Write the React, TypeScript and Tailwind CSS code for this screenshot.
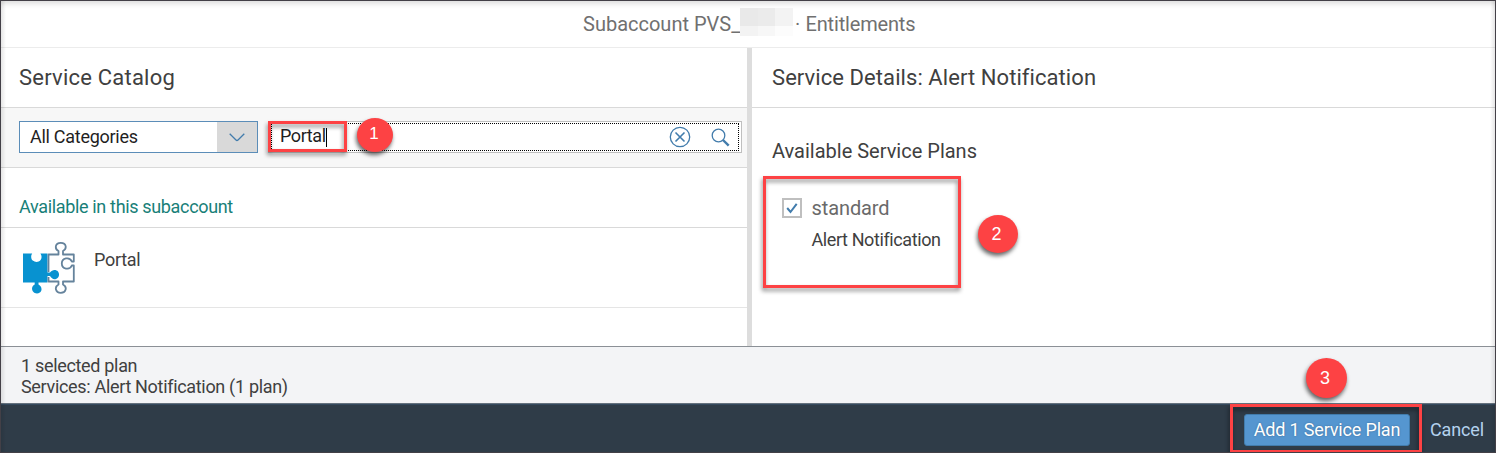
import type { ReactNode } from "react";

function Marker({ children, className }: { children: ReactNode; className: string }) {
  return (
    <div
      className={`absolute flex items-center justify-center rounded-[50%] bg-[#fd4244] font-['Liberation_Sans',sans-serif] text-white shadow-[-1px_3px_4px_rgba(0,0,0,0.6)] ${className}`}
    >
      {children}
    </div>
  );
}

function Highlight({ className }: { className: string }) {
  return (
    <div
      className={`pointer-events-none absolute border-3 border-[#fd4244] drop-shadow-[-1px_3px_2px_rgba(0,0,0,0.45)] ${className}`}
    />
  );
}

function PuzzleIcon() {
  return (
    <svg width="54" height="54" viewBox="0 0 54 54" className="shrink-0">
      <path
        d="M1 12.5H10.2C8.6 14.5 8.9 18 10.8 19.6C13 21.5 16.5 21.5 18.4 19.3C20 17.4 19.9 14.5 18.4 12.5H25.5V31.5H28C30 28.5 34 28.2 36 30.5C38 33 37 37 34 38C31.5 38.8 29.5 37.5 28 35H25.5V41.5H16.5V43.5C20 45.5 20.5 49.5 17.8 51.5C15.5 53.2 12.5 52.5 10.8 50.2C9.3 48 10 45 12.7 43.5V41.5H1Z"
        fill="#0892d0"
      />
      <path
        d="M26.5 31V13.5H36.5V10C32.5 8 32.8 1.8 38.8 1.8C44.8 1.8 45 8 41 10V13.5H51.8V20.5H49.8C47.5 15.2 39.8 17 39.8 22.5C39.8 28 47.5 29.8 49.8 24.5H51.8V40.5H41V43.5C45.5 46 44.2 51.8 38.8 51.8C33.4 51.8 32.1 46 36.5 43.5V40.5H26.5V36"
        fill="none"
        stroke="#65839c"
        strokeWidth="1.8"
        strokeLinejoin="round"
      />
    </svg>
  );
}

export default function App() {
  return (
    <div className="relative flex h-[453px] w-[1496px] flex-col overflow-hidden border border-[#434047] bg-white font-['Roboto',sans-serif] text-[#404040]">
      <header className="flex h-[47px] shrink-0 border-b border-[#ececec] pl-[582px] text-[20px] leading-[46px] whitespace-nowrap text-[#707070] shadow-[inset_0_7px_6px_-5px_rgba(0,0,0,0.16)]">
        <span className="w-[157px]">Subaccount PVS_</span>
        <span className="mt-[7px] grid h-[28px] w-[53px] grid-cols-3 grid-rows-[18px_10px]">
          <i className="bg-[#e9e9e9]" />
          <i className="bg-[#ebebeb]" />
          <i className="bg-[#f3f3f3]" />
          <i className="bg-[#f3f3f3]" />
          <i className="bg-[#f7f7f7]" />
          <i className="bg-[#fcfcfc]" />
        </span>
        <span className="ml-[2px] w-[10.5px]">·</span>
        <span className="tracking-[-0.17px]">Entitlements</span>
      </header>

      <main className="flex h-[298px] shrink-0">
        <section className="w-[746px] shrink-0">
          <h1 className="h-[60px] border-b border-[#d9d9d9] pl-[18px] text-[22px] leading-[59px] tracking-[0.22px]">
            <span>Service Catalog</span>
          </h1>
          <div className="flex h-[60px] border-b border-[#d9d9d9] bg-[#f7f7f7] pt-[13px] pl-[18px] text-[18px] text-[#1f1f1f]">
            <div className="flex h-[32px] w-[239px] border border-[#5b8db8] bg-white">
              <span className="w-[197px] pl-[10px] leading-[30px] tracking-[-0.28px]">All Categories</span>
              <span className="flex flex-1 items-center justify-center bg-[#d9d9d9]">
                <svg width="16" height="9" viewBox="0 0 16 9" fill="none" stroke="#427cac" strokeWidth="1.3">
                  <path d="M0.7 0.7L7 7Q8 8 9 7L15.3 0.7" />
                </svg>
              </span>
            </div>
            <div className="ml-[10px] h-[32px] w-[474px] border border-[#bfbfbf] bg-white px-[2px] py-px">
              <div className="flex h-full items-center border border-dotted border-black pl-[8px]">
                <span className="mb-[2px] leading-[20px] tracking-[-0.4px]">Portal</span>
                <span className="h-[19px] w-px bg-black" />
                <svg className="ml-auto" width="22" height="22" viewBox="0 0 22 22" fill="none" stroke="#427cac" strokeWidth="1.3">
                  <circle cx="11" cy="11" r="9.7" />
                  <path d="M6.5 6.5L15.5 15.5M15.5 6.5L6.5 15.5" strokeWidth="1.6" />
                </svg>
                <svg className="mr-[8px] ml-[20px]" width="19" height="19" viewBox="0 0 19 19" fill="none" stroke="#427cac">
                  <circle cx="7.5" cy="7.5" r="6.3" strokeWidth="1.3" />
                  <path d="M12 12L17.7 17.7" strokeWidth="2.4" />
                </svg>
              </div>
            </div>
          </div>
          <h2 className="h-[60px] border-b border-[#d9d9d9] pt-[19px] pl-[18px] text-[18px] leading-[40px] tracking-[-0.34px] text-[#188078]">
            <span>Available in this subaccount</span>
          </h2>
          <div className="flex h-[80px] border-b border-[#e5e5e5] pt-[13px] pl-[21px] text-[18px]">
            <PuzzleIcon />
            <span className="ml-[18px] leading-[38px] tracking-[-0.3px]">Portal</span>
          </div>
        </section>
        <div className="w-[5px] shrink-0 bg-[#dddddd]" />
        <section className="min-w-0 flex-1">
          <h1 className="h-[60px] border-b border-[#d9d9d9] pl-[20px] text-[22px] leading-[59px] tracking-[0.07px]">
            <span>Service Details: Alert Notification</span>
          </h1>
          <h2 className="mt-[28px] pl-[20px] text-[20px] leading-[30px]">
            <span>Available Service Plans</span>
          </h2>
          <div className="mt-[31px] flex pl-[30px]">
            <span className="mt-px flex h-[20px] w-[20px] items-center justify-center border-2 border-[#bfbfbf]">
              <svg width="12" height="12" viewBox="0 0 12 12" fill="none" stroke="#427cac" strokeWidth="2">
                <path d="M1.2 6L4.5 10L10.7 1.8" />
              </svg>
            </span>
            <div className="ml-[9.5px] flex flex-col">
              <span className="text-[20px] leading-[22px] tracking-[-0.1px] text-[#6a6a6a]">standard</span>
              <span className="mt-[9px] text-[18px] leading-[24px] tracking-[-0.4px]">Alert Notification</span>
            </div>
          </div>
        </section>
      </main>

      <section className="h-[58px] shrink-0 border-y border-t-[#8b9096] border-b-[#65717d] bg-[#f3f4f6] pt-[8px] pl-[20px] text-[18px] leading-[21px] tracking-[-0.32px]">
        <p>1 selected plan</p>
        <p>Services: Alert Notification (1 plan)</p>
      </section>
      <footer className="flex min-h-0 flex-1 items-start justify-end bg-[#2f3c48] pt-[10px] text-[18px] shadow-[inset_0_1px_0_#354a5f]">
        <button className="h-[32px] w-[166px] rounded-[3px] border border-[#427cac] bg-[#5596d0] leading-[30px] tracking-[-0.17px] whitespace-nowrap text-white [text-shadow:0_0_2px_rgba(0,0,0,0.3)]">Add 1 Service Plan</button>
        <button className="ml-[20px] h-[32px] w-[65px] text-left leading-[32px] tracking-[-0.15px] text-[#b4d2ee]">Cancel</button>
      </footer>

      <div className="pointer-events-none absolute inset-y-0 left-0 w-[5px] bg-linear-to-r from-black/10 to-transparent" />
      <div className="pointer-events-none absolute inset-y-0 right-0 w-[5px] bg-linear-to-l from-black/10 to-transparent" />

      <Highlight className="top-[120px] left-[267px] h-[31px] w-[79px]" />
      <Marker className="top-[117px] left-[356px] h-[34px] w-[36px] pr-[2px] pb-[3px] text-[17px]">1</Marker>
      <Highlight className="top-[175px] left-[762px] h-[112px] w-[198px]" />
      <Marker className="top-[214px] left-[977px] h-[38px] w-[40px] pr-[3px] text-[18px]">2</Marker>
      <Highlight className="top-[403px] left-[1229px] h-[49px] w-[192px]" />
      <Marker className="top-[357px] left-[1305px] h-[40px] w-[41px] pr-[3px] text-[18px]">3</Marker>
    </div>
  );
}
